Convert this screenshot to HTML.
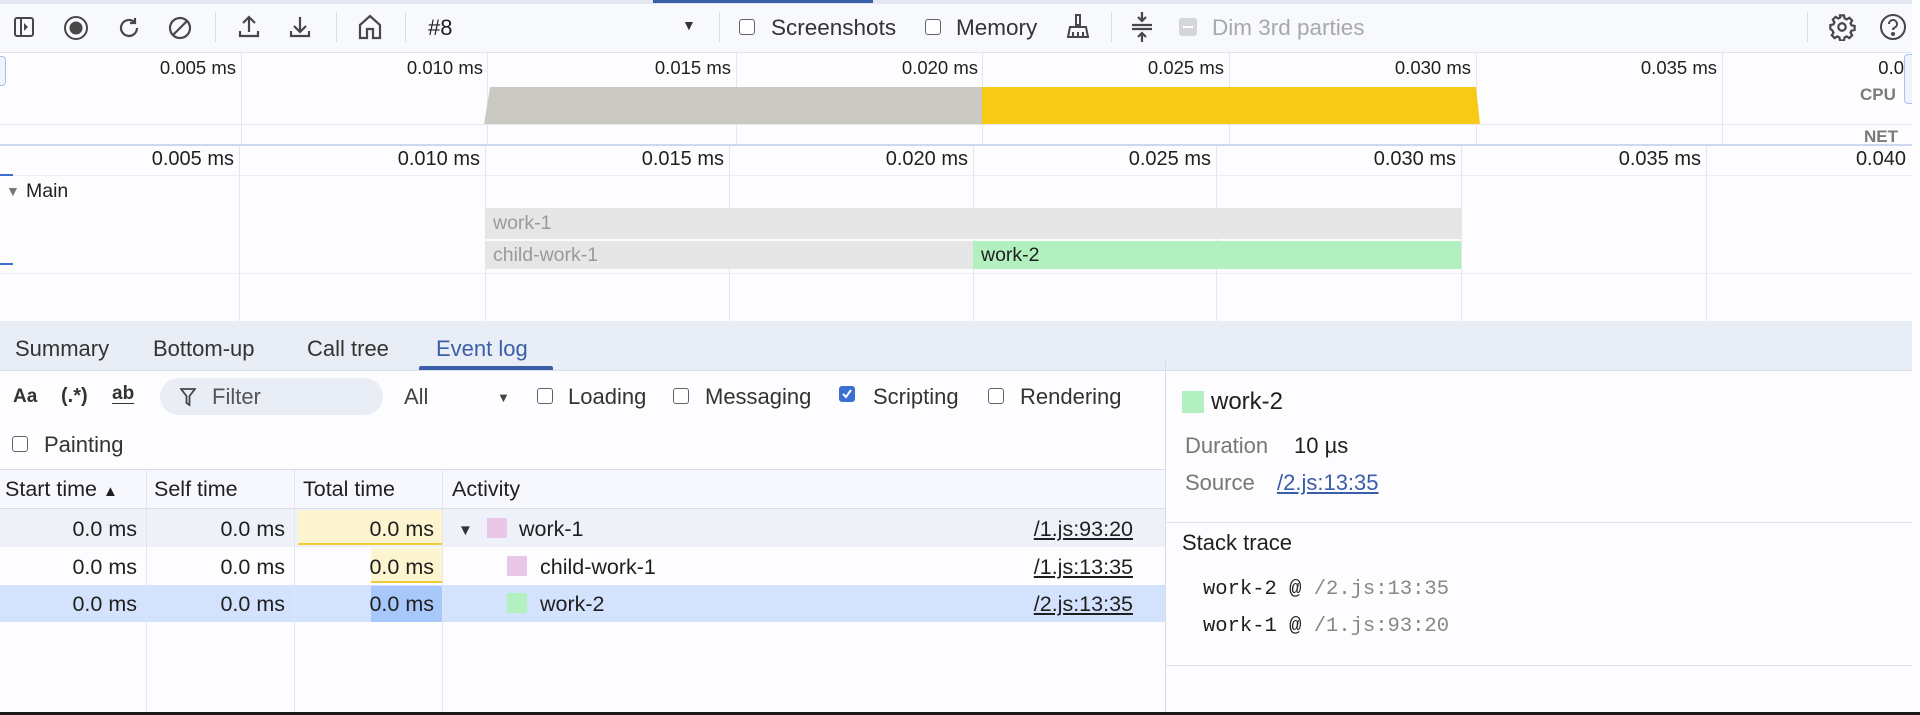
<!DOCTYPE html>
<html><head><meta charset="utf-8"><style>
*{box-sizing:border-box;margin:0;padding:0}
body{width:1920px;height:715px;overflow:hidden;background:#fdfdff;font-family:"Liberation Sans",sans-serif;color:#1f1f1f;position:relative;font-size:18px}
.a{position:absolute;white-space:nowrap}
.vl{position:absolute;width:1px;background:#e3e6ec}
.hl{position:absolute;height:1px;background:#dde3ee}
.cb{position:absolute;width:16px;height:16px;border:1.5px solid #5f6368;border-radius:3px;background:#fff}
.mono{font-family:"Liberation Mono",monospace}
svg{position:absolute}
</style></head><body>
<!-- toolbar -->
<div class="a" style="left:0;top:0;width:1920px;height:53px;background:#f8f9fd;border-bottom:1px solid #dfe3ec"></div>
<div class="a" style="left:0;top:0;width:1920px;height:4px;background:#e4e8f2"></div>
<div class="a" style="left:653px;top:0;width:220px;height:3px;background:#3b5ea8"></div>
<svg style="left:12px;top:15px" width="24" height="24" viewBox="0 0 24 24" fill="none" stroke="#474747" stroke-width="2"><rect x="3" y="3" width="18" height="18" rx="2"/><line x1="9" y1="3" x2="9" y2="21"/><path d="M12 8l4 4-4 4z" fill="#474747" stroke="none"/></svg>
<svg style="left:63px;top:15px" width="26" height="26" viewBox="0 0 26 26"><circle cx="13" cy="13" r="11" fill="none" stroke="#474747" stroke-width="2"/><circle cx="13" cy="13" r="6.5" fill="#474747"/></svg>
<svg style="left:116px;top:15px" width="26" height="26" viewBox="0 0 26 26" fill="none" stroke="#474747" stroke-width="2.2"><path d="M21 13a8 8 0 1 1-3-6.3"/><path d="M19 3v5h-5"/></svg>
<svg style="left:167px;top:15px" width="26" height="26" viewBox="0 0 26 26" fill="none" stroke="#474747" stroke-width="2.2"><circle cx="13" cy="13" r="10"/><line x1="6" y1="20" x2="20" y2="6"/></svg>
<div class="vl" style="left:215px;top:12px;height:30px;background:#d5dbe8"></div>
<svg style="left:237px;top:14px" width="24" height="26" viewBox="0 0 24 26" fill="none" stroke="#474747" stroke-width="2.2"><path d="M12 18V3M6 9l6-6 6 6M3 17v5h18v-5"/></svg>
<svg style="left:288px;top:14px" width="24" height="26" viewBox="0 0 24 26" fill="none" stroke="#474747" stroke-width="2.2"><path d="M12 3v15M6 12l6 6 6-6M3 17v5h18v-5"/></svg>
<div class="vl" style="left:336px;top:12px;height:30px;background:#d5dbe8"></div>
<svg style="left:357px;top:13px" width="26" height="28" viewBox="0 0 26 28" fill="none" stroke="#474747" stroke-width="2.2"><path d="M3 12L13 3l10 9v13h-7v-9h-6v9H3z"/></svg>
<div class="vl" style="left:405px;top:12px;height:30px;background:#d5dbe8"></div>
<div class="a" style="left:428px;top:15px;font-size:22px">#8</div>
<div class="a" style="left:682px;top:17px;font-size:14px;color:#333">▼</div>
<div class="vl" style="left:719px;top:12px;height:30px;background:#d5dbe8"></div>
<div class="cb" style="left:739px;top:19px"></div><div class="a" style="left:771px;top:15px;font-size:22.5px;color:#333">Screenshots</div>
<div class="cb" style="left:925px;top:19px"></div><div class="a" style="left:956px;top:15px;font-size:22.5px;color:#333">Memory</div>
<svg style="left:1065px;top:13px" width="26" height="28" viewBox="0 0 26 28" fill="none" stroke="#474747" stroke-width="2"><path d="M11 2h4v10h-4zM5 14h16l2 10H3zM8 19v5M13 19v5M18 19v5"/></svg>
<div class="vl" style="left:1111px;top:12px;height:30px;background:#d5dbe8"></div>
<svg style="left:1130px;top:10px" width="24" height="34" viewBox="0 0 24 34" fill="none" stroke="#474747" stroke-width="2.2"><path d="M12 2v9M8 7l4 4 4-4M2 15h20M2 19h20M12 32v-9M8 27l4-4 4 4"/></svg>
<div class="a" style="left:1179px;top:18px;width:18px;height:18px;background:#d4d6da;border-radius:3px"><div style="margin:8px 4px;height:2px;background:#fff"></div></div>
<div class="a" style="left:1212px;top:15px;font-size:22.5px;color:#a6a8ac">Dim 3rd parties</div>
<div class="vl" style="left:1807px;top:12px;height:30px;background:#d5dbe8"></div>
<svg style="left:1828px;top:13px" width="28" height="28" viewBox="0 0 24 24" fill="none" stroke="#474747" stroke-width="1.9"><path d="M10.3 2h3.4l.5 2.6 1.8.9 2.3-1.4 2.4 2.4-1.4 2.3.9 1.8 2.6.5v3.4l-2.6.5-.9 1.8 1.4 2.3-2.4 2.4-2.3-1.4-1.8.9-.5 2.6h-3.4l-.5-2.6-1.8-.9-2.3 1.4-2.4-2.4 1.4-2.3-.9-1.8L2 13.7v-3.4l2.6-.5.9-1.8-1.4-2.3 2.4-2.4 2.3 1.4 1.8-.9z"/><circle cx="12" cy="12" r="3.2"/></svg>
<svg style="left:1878px;top:12px" width="30" height="30" viewBox="0 0 30 30" fill="none" stroke="#474747" stroke-width="2"><circle cx="15" cy="15" r="12"/><path d="M11 12a4 4 0 1 1 5.5 3.7c-1 .5-1.5 1.2-1.5 2.3"/><circle cx="15" cy="22" r="1" fill="#474747"/></svg>
<!-- overview -->
<div class="a" style="left:0;top:56px;width:6px;height:30px;border:1px solid #a8c0ea;border-left:none;border-radius:0 4px 4px 0;background:#eef3fc"></div>
<div class="vl" style="left:241px;top:53px;height:92px"></div>
<div class="vl" style="left:487px;top:53px;height:92px"></div>
<div class="vl" style="left:736px;top:53px;height:92px"></div>
<div class="vl" style="left:982px;top:53px;height:92px"></div>
<div class="vl" style="left:1229px;top:53px;height:92px"></div>
<div class="vl" style="left:1476px;top:53px;height:92px"></div>
<div class="vl" style="left:1722px;top:53px;height:92px"></div>
<div class="a" style="left:0;top:57px;width:236px;text-align:right;font-size:18.5px">0.005 ms</div>
<div class="a" style="left:241px;top:57px;width:242px;text-align:right;font-size:18.5px">0.010 ms</div>
<div class="a" style="left:487px;top:57px;width:244px;text-align:right;font-size:18.5px">0.015 ms</div>
<div class="a" style="left:736px;top:57px;width:242px;text-align:right;font-size:18.5px">0.020 ms</div>
<div class="a" style="left:982px;top:57px;width:242px;text-align:right;font-size:18.5px">0.025 ms</div>
<div class="a" style="left:1229px;top:57px;width:242px;text-align:right;font-size:18.5px">0.030 ms</div>
<div class="a" style="left:1476px;top:57px;width:241px;text-align:right;font-size:18.5px">0.035 ms</div>
<div class="a" style="left:1722px;top:57px;width:182px;text-align:right;font-size:18.5px">0.0</div>
<svg style="left:484px;top:87px" width="1000" height="38"><path d="M0 37L4 13L6 0H498V37Z" fill="#cbcac2"/><path d="M498 0H992L996 37H498Z" fill="#f8c915"/></svg>
<div class="hl" style="left:0;top:124px;width:1920px;background:#e6e8ec"></div>
<div class="a" style="left:1860px;top:85px;font-size:17px;font-weight:bold;color:#7a7a7a">CPU</div>
<div class="a" style="left:1864px;top:127px;font-size:17px;font-weight:bold;color:#7a7a7a">NET</div>
<div class="a" style="left:1904px;top:54px;width:10px;height:50px;border:1px solid #a8c0ea;border-radius:4px 0 0 4px;background:#eef3fc"></div>
<div class="hl" style="left:0;top:144px;width:1920px;background:#cdd8ef;height:2px"></div>
<!-- main timeline -->
<div class="vl" style="left:239px;top:146px;height:175px"></div>
<div class="vl" style="left:485px;top:146px;height:175px"></div>
<div class="vl" style="left:729px;top:146px;height:175px"></div>
<div class="vl" style="left:973px;top:146px;height:175px"></div>
<div class="vl" style="left:1216px;top:146px;height:175px"></div>
<div class="vl" style="left:1461px;top:146px;height:175px"></div>
<div class="vl" style="left:1706px;top:146px;height:175px"></div>
<div class="a" style="left:0;top:148px;width:234px;text-align:right;font-size:20px">0.005 ms</div>
<div class="a" style="left:239px;top:148px;width:241px;text-align:right;font-size:20px">0.010 ms</div>
<div class="a" style="left:485px;top:148px;width:239px;text-align:right;font-size:20px">0.015 ms</div>
<div class="a" style="left:729px;top:148px;width:239px;text-align:right;font-size:20px">0.020 ms</div>
<div class="a" style="left:973px;top:148px;width:238px;text-align:right;font-size:20px">0.025 ms</div>
<div class="a" style="left:1216px;top:148px;width:240px;text-align:right;font-size:20px">0.030 ms</div>
<div class="a" style="left:1461px;top:148px;width:240px;text-align:right;font-size:20px">0.035 ms</div>
<div class="a" style="left:1706px;top:148px;width:200px;text-align:right;font-size:20px">0.040</div>
<div class="hl" style="left:0;top:175px;width:1920px;background:#eceef2"></div>
<div class="a" style="left:0;top:174px;width:13px;height:2px;background:#3b6fd0"></div>
<div class="a" style="left:6px;top:183px;font-size:14px;color:#777">▼</div>
<div class="a" style="left:26px;top:180px;font-size:19.5px">Main</div>
<div class="a" style="left:486px;top:208px;width:975px;height:31px;background:#e6e6e6;color:#9a9a9a;font-size:19.5px;padding:4px 7px">work-1</div>
<div class="a" style="left:486px;top:241px;width:487px;height:28px;background:#e6e6e6;color:#9a9a9a;font-size:19.5px;padding:3px 7px">child-work-1</div>
<div class="a" style="left:973px;top:241px;width:488px;height:28px;background:#b3f0c0;color:#1f1f1f;font-size:19.5px;padding:3px 8px">work-2</div>
<div class="hl" style="left:0;top:273px;width:1920px;background:#eceef2"></div>
<div class="a" style="left:0;top:263px;width:13px;height:2px;background:#3b6fd0"></div>
<!-- tabs -->
<div class="a" style="left:0;top:321px;width:1920px;height:50px;background:#e9edf6;border-bottom:1px solid #d6dcea"></div>
<div class="a" style="left:15px;top:336px;font-size:22px;color:#333">Summary</div>
<div class="a" style="left:153px;top:336px;font-size:22px;color:#333">Bottom-up</div>
<div class="a" style="left:307px;top:336px;font-size:22px;color:#333">Call tree</div>
<div class="a" style="left:436px;top:336px;font-size:22px;color:#3b5ea8">Event log</div>
<div class="a" style="left:419px;top:366px;width:134px;height:4px;background:#3b5ea8;border-radius:2px 2px 0 0"></div>
<!-- filter row -->
<div class="a" style="left:13px;top:386px;font-size:19px;font-weight:bold;color:#333">Aa</div>
<div class="a" style="left:61px;top:385px;font-size:20px;font-weight:bold;color:#333">(.*)</div>
<div class="a" style="left:112px;top:383px;font-size:19px;font-weight:bold;color:#333;text-decoration:underline;text-underline-offset:4px">ab</div>
<div class="a" style="left:160px;top:378px;width:223px;height:37px;background:#e9edf6;border-radius:19px"></div>
<svg style="left:180px;top:387px" width="16" height="20" viewBox="0 0 16 20" fill="none" stroke="#444" stroke-width="1.8"><path d="M1 2h14l-5.5 7v9l-3-2V9z"/></svg>
<div class="a" style="left:212px;top:384px;font-size:22px;color:#555">Filter</div>
<div class="a" style="left:404px;top:384px;font-size:22px;color:#444">All</div>
<div class="a" style="left:497px;top:390px;font-size:13px;color:#444">▼</div>
<div class="cb" style="left:537px;top:388px"></div><div class="a" style="left:568px;top:384px;font-size:22px;color:#333">Loading</div>
<div class="cb" style="left:673px;top:388px"></div><div class="a" style="left:705px;top:384px;font-size:22px;color:#333">Messaging</div>
<div class="cb" style="left:839px;top:386px;background:#3b6fd0;border-color:#3b6fd0"><svg style="left:1px;top:1px" width="12" height="12" viewBox="0 0 12 12"><path d="M2 6l3 3 5-7" fill="none" stroke="#fff" stroke-width="2"/></svg></div><div class="a" style="left:873px;top:384px;font-size:22px;color:#333">Scripting</div>
<div class="cb" style="left:988px;top:388px"></div><div class="a" style="left:1020px;top:384px;font-size:22px;color:#333">Rendering</div>
<div class="cb" style="left:12px;top:436px"></div><div class="a" style="left:44px;top:432px;font-size:22px;color:#333">Painting</div>
<!-- table -->
<div class="a" style="left:0;top:469px;width:1165px;height:40px;background:#f6f8fd;border-top:1px solid #d6dcea;border-bottom:1px solid #d6dcea"></div>
<div class="a" style="left:0;top:509px;width:1165px;height:38px;background:#eef1f8"></div>
<div class="a" style="left:0;top:585px;width:1165px;height:37px;background:#d3e3fd"></div>
<div class="a" style="left:298px;top:510px;width:144px;height:35px;background:#fdf5cf;border-bottom:2px solid #f0cd3a"></div>
<div class="a" style="left:371px;top:548px;width:71px;height:35px;background:#fdf5cf;border-bottom:2px solid #f0cd3a"></div>
<div class="a" style="left:371px;top:586px;width:71px;height:36px;background:#a8c7fa"></div>
<div class="vl" style="left:146px;top:470px;height:245px"></div>
<div class="vl" style="left:294px;top:470px;height:245px"></div>
<div class="vl" style="left:442px;top:470px;height:245px"></div>
<div class="vl" style="left:1165px;top:360px;height:355px;background:#d6dcea"></div>
<div class="a" style="left:5px;top:477px;font-size:21.5px">Start time <span style="font-size:15px">▲</span></div>
<div class="a" style="left:154px;top:477px;font-size:21.5px">Self time</div>
<div class="a" style="left:303px;top:477px;font-size:21.5px">Total time</div>
<div class="a" style="left:452px;top:477px;font-size:21.5px">Activity</div>
<div class="a" style="left:0;top:517px;width:137px;text-align:right;font-size:21.5px">0.0 ms</div>
<div class="a" style="left:146px;top:517px;width:139px;text-align:right;font-size:21.5px">0.0 ms</div>
<div class="a" style="left:294px;top:517px;width:140px;text-align:right;font-size:21.5px">0.0 ms</div>
<div class="a" style="left:458px;top:522px;font-size:15px;color:#333">▼</div>
<div class="a" style="left:487px;top:518px;width:20px;height:20px;background:#e8c7e8"></div>
<div class="a" style="left:519px;top:517px;font-size:21.5px">work-1</div>
<div class="a" style="left:900px;top:517px;width:233px;text-align:right;font-size:21.5px;text-decoration:underline">/1.js:93:20</div>
<div class="a" style="left:0;top:555px;width:137px;text-align:right;font-size:21.5px">0.0 ms</div>
<div class="a" style="left:146px;top:555px;width:139px;text-align:right;font-size:21.5px">0.0 ms</div>
<div class="a" style="left:294px;top:555px;width:140px;text-align:right;font-size:21.5px">0.0 ms</div>
<div class="a" style="left:507px;top:556px;width:20px;height:20px;background:#e8c7e8"></div>
<div class="a" style="left:540px;top:555px;font-size:21.5px">child-work-1</div>
<div class="a" style="left:900px;top:555px;width:233px;text-align:right;font-size:21.5px;text-decoration:underline">/1.js:13:35</div>
<div class="a" style="left:0;top:592px;width:137px;text-align:right;font-size:21.5px">0.0 ms</div>
<div class="a" style="left:146px;top:592px;width:139px;text-align:right;font-size:21.5px">0.0 ms</div>
<div class="a" style="left:294px;top:592px;width:140px;text-align:right;font-size:21.5px">0.0 ms</div>
<div class="a" style="left:507px;top:593px;width:20px;height:20px;background:#b3f0c0"></div>
<div class="a" style="left:540px;top:592px;font-size:21.5px">work-2</div>
<div class="a" style="left:900px;top:592px;width:233px;text-align:right;font-size:21.5px;text-decoration:underline">/2.js:13:35</div>
<!-- right panel -->
<div class="a" style="left:1182px;top:391px;width:22px;height:22px;background:#b3f0c0"></div>
<div class="a" style="left:1211px;top:388px;font-size:24px">work-2</div>
<div class="a" style="left:1185px;top:433px;font-size:22px;color:#777">Duration</div>
<div class="a" style="left:1294px;top:433px;font-size:22px">10 µs</div>
<div class="a" style="left:1185px;top:470px;font-size:22px;color:#777">Source</div>
<div class="a" style="left:1277px;top:470px;font-size:22px;color:#3b5ea8;text-decoration:underline">/2.js:13:35</div>
<div class="hl" style="left:1166px;top:522px;width:754px"></div>
<div class="a" style="left:1182px;top:530px;font-size:22px">Stack trace</div>
<div class="a mono" style="left:1203px;top:578px;font-size:20.5px">work-2 @ <span style="color:#888">/2.js:13:35</span></div>
<div class="a mono" style="left:1203px;top:615px;font-size:20.5px">work-1 @ <span style="color:#888">/1.js:93:20</span></div>
<div class="hl" style="left:1166px;top:665px;width:754px"></div>
<div class="a" style="left:1912px;top:0;width:8px;height:715px;background:#fdfdff"></div>
<div class="a" style="left:0;top:712px;width:1920px;height:3px;background:#1a1a1a"></div>
</body></html>
